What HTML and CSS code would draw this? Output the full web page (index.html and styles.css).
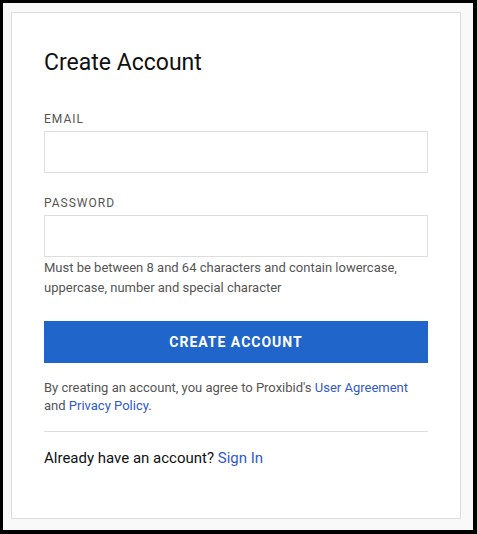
FILE: index.html
```html
<!DOCTYPE html>
<html lang="en">
<head>
  <meta charset="UTF-8">
  <meta name="viewport" content="width=device-width, initial-scale=1.0">
  <title>Create Account</title>
  <link rel="stylesheet" href="styles.css">
</head>
<body>

  <div class="frame">
    <div class="card">
      <h1 class="title">Create Account</h1>

      <label class="field-label" for="email">EMAIL</label>
      <input class="field" type="email" id="email">

      <label class="field-label second" for="password">PASSWORD</label>
      <input class="field" type="password" id="password">
      <p class="hint">Must be between 8 and 64 characters and contain lowercase, uppercase, number and special character</p>

      <button class="submit" type="button">CREATE ACCOUNT</button>

      <p class="terms">By creating an account, you agree to Proxibid's <a href="#">User Agreement</a> and <a href="#">Privacy Policy</a>.</p>

      <div class="divider"></div>

      <p class="signin">Already have an account? <a href="#">Sign In</a></p>
    </div>
  </div>

</body>
</html>
```

FILE: styles.css
```css
* {
  box-sizing: border-box;
}
body {
  margin: 0;
  font-family: Roboto, 'Liberation Sans', sans-serif;
  color: #222;
}
.frame {
  width: 477px;
  height: 534px;
  background: #f9f9f9;
  border: 3px solid #000;
  border-right-width: 4px;
  border-bottom-width: 4px;
  padding: 9px 0 0 8px;
}
.card {
  width: 450px;
  height: 507px;
  background: #fff;
  border: 1px solid #ddd;
  padding: 36px 32px 0 32px;
}
.title {
  margin: 0;
  font-size: 23px;
  line-height: 28px;
  font-weight: 400;
  color: #111;
}
.field-label {
  display: block;
  margin-top: 34px;
  margin-bottom: 4px;
  font-size: 12px;
  line-height: 16px;
  letter-spacing: 1px;
  color: #555;
}
.field-label.second {
  margin-top: 22px;
}
.field {
  display: block;
  width: 100%;
  height: 42px;
  border: 1px solid #ddd;
  border-radius: 0;
  padding: 0 12px;
  font-size: 14px;
  font-family: inherit;
}
.field:focus {
  outline: none;
  border-color: #2065c9;
}
.hint {
  margin: 1px 0 0;
  font-size: 13px;
  line-height: 20px;
  color: #555;
}
.submit {
  display: block;
  width: 100%;
  height: 42px;
  margin-top: 23px;
  border: none;
  background: #2065c9;
  color: #fff;
  font-family: inherit;
  font-size: 14px;
  font-weight: 700;
  letter-spacing: 1px;
}
.terms {
  margin: 16px 0 0;
  font-size: 13px;
  line-height: 18px;
  color: #555;
}
a {
  color: #3259cc;
  text-decoration: none;
}
.divider {
  height: 1px;
  margin-top: 16px;
  background: #ddd;
}
.signin {
  margin: 16px 0 0;
  font-size: 15px;
  line-height: 20px;
  color: #111;
}
```
